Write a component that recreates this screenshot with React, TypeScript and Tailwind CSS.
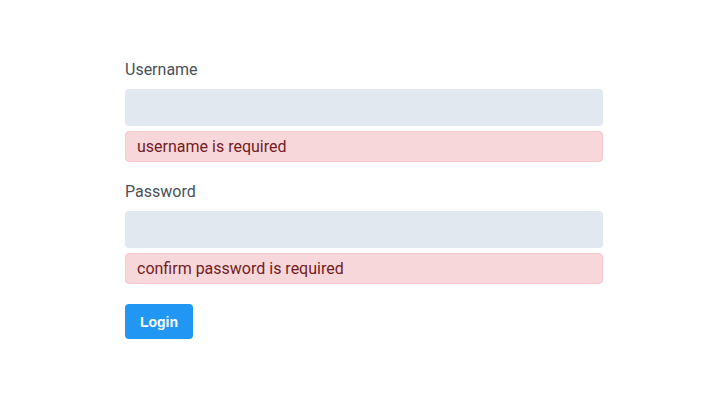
export default function App() {
  return (
    <div className="min-h-[414px] bg-white pl-[125px] pt-[58px] font-['Roboto',sans-serif]">
      <form className="flex w-[478px] flex-col" onSubmit={(e) => e.preventDefault()}>
        <label className="mb-[7px] text-base leading-6 text-[#495057]">Username</label>
        <input type="text" className="h-[37px] rounded bg-[#e2e8f0] px-3 outline-none" />
        <div className="mt-[5px] h-[31px] rounded border border-[#f5c6cb] bg-[#f8d7da] px-[11px] text-base leading-[29px] text-[#721c24]">
          username is required
        </div>

        <label className="mb-[7px] mt-[18px] text-base leading-6 text-[#495057]">Password</label>
        <input type="password" className="h-[37px] rounded bg-[#e2e8f0] px-3 outline-none" />
        <div className="mt-[5px] h-[31px] rounded border border-[#f5c6cb] bg-[#f8d7da] px-[11px] text-base leading-[29px] text-[#721c24]">
          confirm password is required
        </div>

        <div className="mt-5">
          <button
            type="submit"
            className="h-[35px] w-[68px] rounded bg-[#2196f3] font-['Liberation_Sans',sans-serif] text-sm font-bold text-white"
          >
            Login
          </button>
        </div>
      </form>
    </div>
  )
}
